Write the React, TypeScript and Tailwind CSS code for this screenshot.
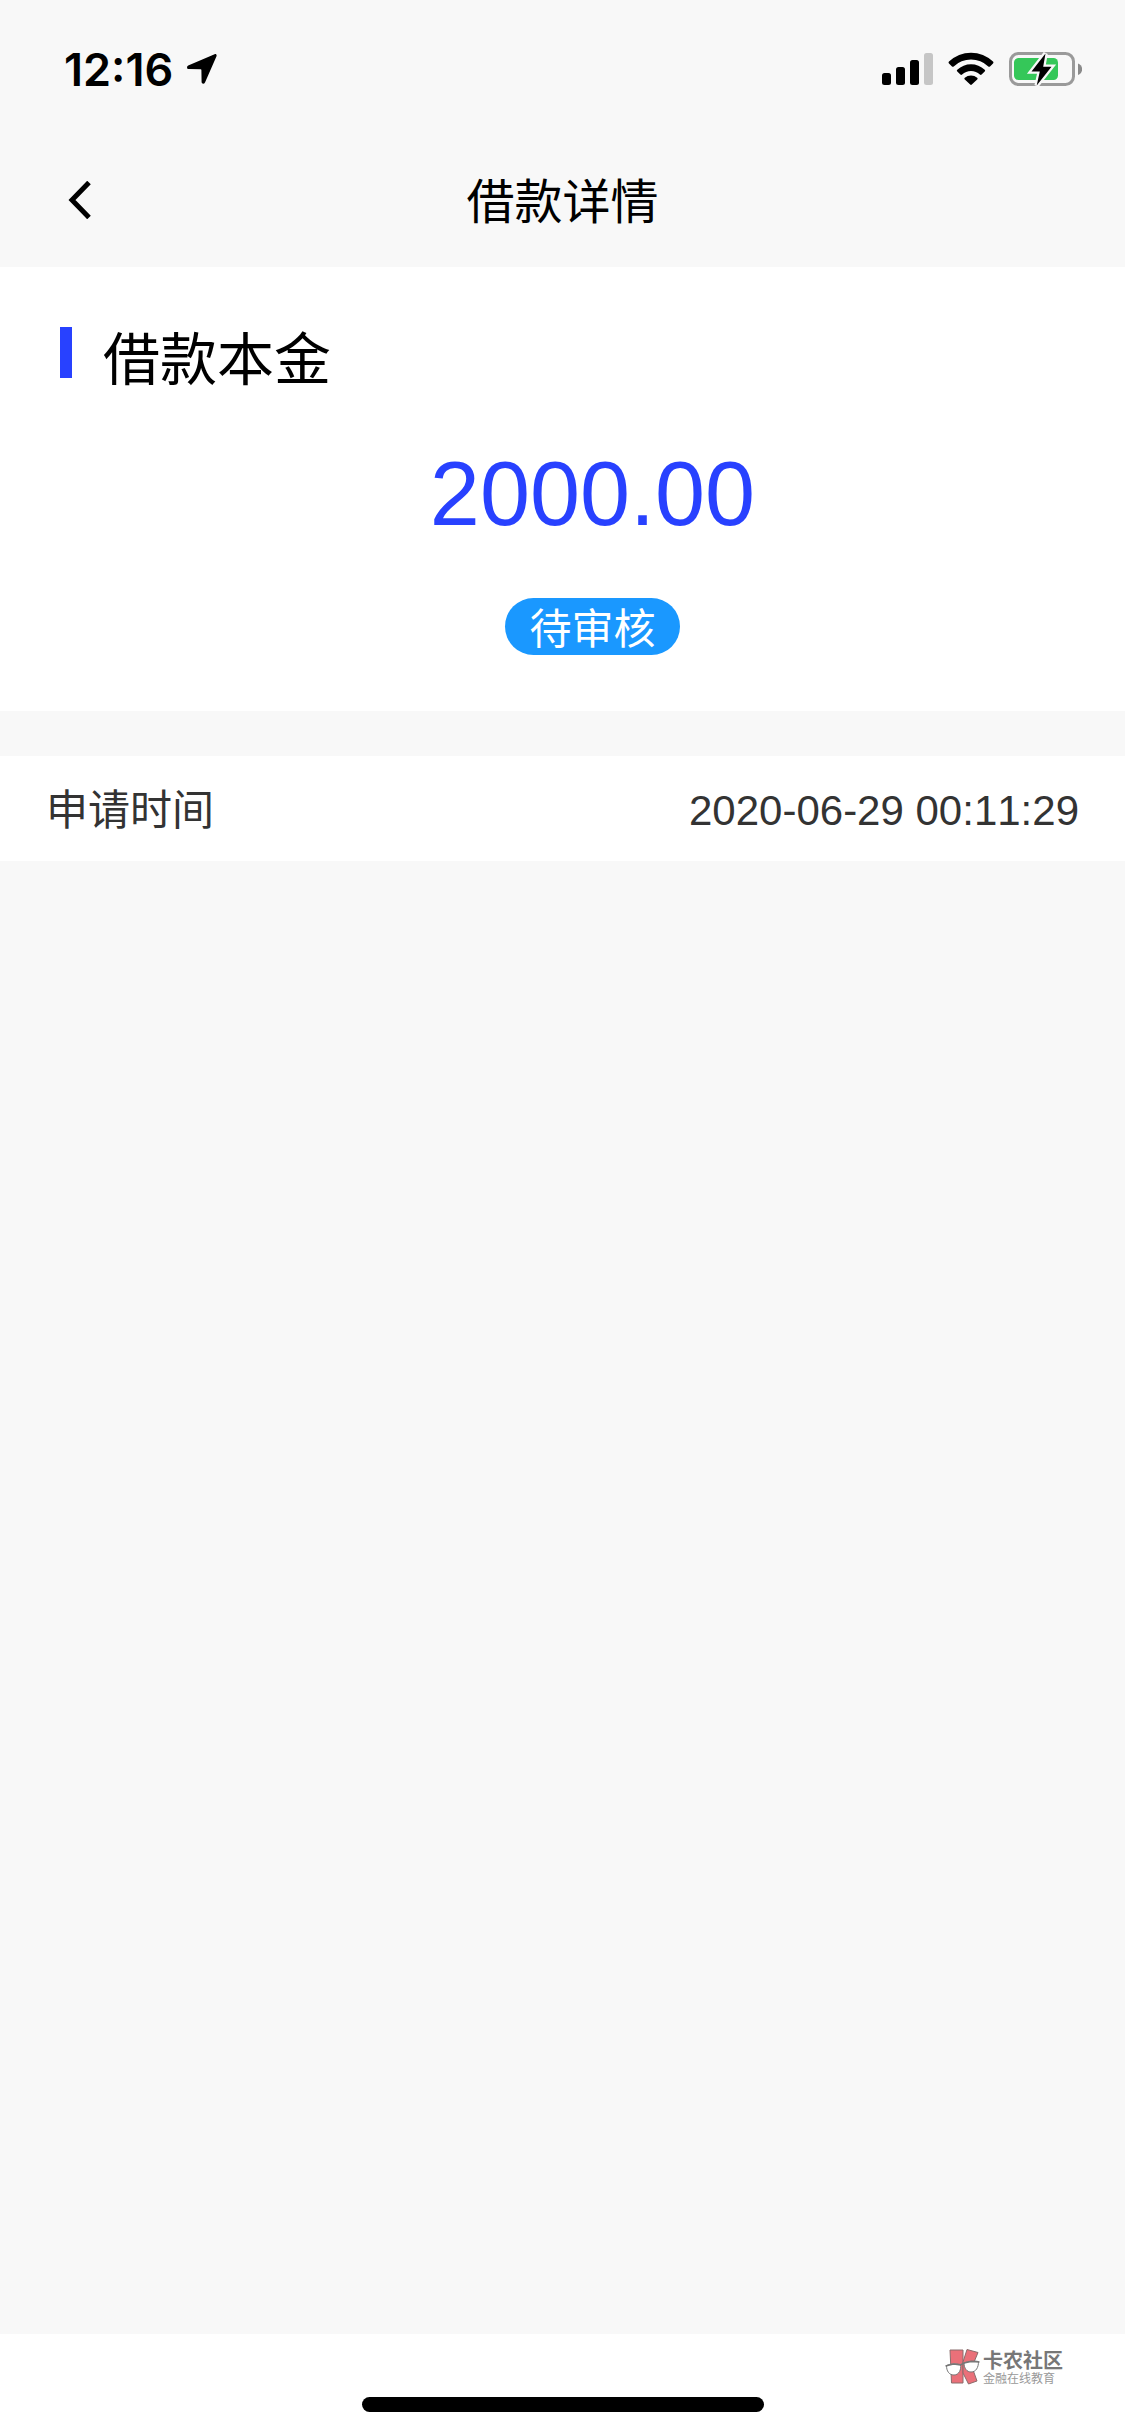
import React from 'react';

const SignalIcon: React.FC = () => (
  <svg width="51" height="32" viewBox="0 0 51 32" aria-hidden="true">
    <rect x="0" y="20" width="9" height="12" rx="2.5" />
    <rect x="14" y="14" width="9" height="18" rx="2.5" />
    <rect x="28" y="7" width="9" height="25" rx="2.5" />
    <rect x="42" y="0" width="9" height="32" rx="2.5" fill="#c6c6c6" />
  </svg>
);

const WifiIcon: React.FC = () => (
  <svg width="46" height="34" viewBox="0 0 46 34" aria-hidden="true">
    <path d="M1 9.6a31.5 31.5 0 0 1 44 0c.6.6.6 1.200 0 1.800l-3 3c-.5.5-1.200.5-1.700 0a25 25 0 0 0-34.600 0c-.5.5-1.200.5-1.700 0l-3-3c-.6-.6-.6-1.200 0-1.800z" />
    <path d="M9.300 17.800a20 20 0 0 1 27.400 0c.6.6.6 1.200 0 1.800l-3.100 3c-.5.5-1.100.5-1.700 0a13 13 0 0 0-17.800 0c-.6.5-1.200.5-1.700 0l-3.100-3c-.6-.6-.6-1.200 0-1.800z" />
    <path d="M16.800 25.700a9.500 9.500 0 0 1 12.400 0c.6.5.6 1.200 0 1.700l-5.400 5.200c-.5.500-1.100.500-1.600 0l-5.400-5.200c-.6-.5-.6-1.200 0-1.700z" />
  </svg>
);

const BatteryIcon: React.FC = () => (
  <svg width="73" height="36" viewBox="0 0 73 36" aria-hidden="true">
    <rect x="1.500" y="2.500" width="63" height="31" rx="8" fill="none" stroke="#9a9a9a" strokeWidth="3" />
    <path d="M69 12.500c5.500 1.500 5.500 10 0 11.500z" fill="#8a8a8a" />
    <rect x="5" y="7" width="44" height="22" rx="4.500" fill="#35c759" />
    <path
      d="M36.500 2.500L22.500 20.500h8.300L27.700 34.500L42.500 15.800h-8.300z"
      fill="#000"
      stroke="#f8f8f8"
      strokeWidth="4.500"
      paintOrder="stroke"
    />
  </svg>
);

const LocationIcon: React.FC = () => (
  <svg width="30" height="30" viewBox="0 0 30 30" aria-hidden="true">
    <path d="M27.600.2L1.200 11.600c-1.800.9-1.500 3.400.6 3.500L13.700 15.300c.5 0 .7.200.7.700L14.600 28c.1 2 2.500 2.300 3.400.500L29.500 2.200C30 .800 29-.300 27.600.200z" />
  </svg>
);

const LogoIcon: React.FC = () => (
  <svg width="35" height="36" viewBox="0 0 35 36" aria-hidden="true">
    <g fill="#ea7079" stroke="#8a6c6c" strokeWidth="1" strokeLinejoin="round">
      <path d="M5 1h13v33H6.500L6 22z" />
      <path d="M22 .5L33 3.500 27 18l5 14-8.500 3L18 24V13z" />
    </g>
    <g fill="#fff" stroke="#777" strokeWidth="1">
      <path d="M1.500 16.500c4-2 10-2 14-1 1 5-1.500 10.500-6.500 10.500-5 0-7.500-4-7.500-9.500z" />
      <path d="M19 14c4-2 10-2.500 14.500-1.500 0 6-2.500 10.500-7.500 10.500-4 0-7-3.500-7-9z" />
    </g>
    <path d="M.5 17l8-2 7 1 3.500-2 7-1.500 8.500.500" fill="none" stroke="#777" strokeWidth="1.500" />
  </svg>
);

const StatusBar: React.FC = () => (
  <div className="flex h-[132px] items-center justify-between pt-[6px] pr-[43px] pl-[64px]">
    <div className="flex items-center gap-[14px]">
      <span className="font-['Inter',sans-serif] text-[45px] leading-none font-semibold">12:16</span>
      <LocationIcon />
    </div>
    <div className="flex items-center gap-[15px]">
      <SignalIcon />
      <WifiIcon />
      <BatteryIcon />
    </div>
  </div>
);

const App: React.FC = () => {
  const loan = {
    principal: '2000.00',
    status: '待审核',
    appliedAt: '2020-06-29 00:11:29'
  };

  return (
    <div className="flex min-h-screen flex-col bg-[#f8f8f8] font-['Liberation_Sans','Noto_Sans_CJK_SC',sans-serif] text-black [font-kerning:none]">
      <header>
        <StatusBar />
        <div className="grid h-[135px] grid-cols-[1fr_auto_1fr] items-center px-[60px]">
          <button type="button" aria-label="返回" className="flex size-[40px] items-center justify-center">
            <svg width="24" height="38" viewBox="0 0 24 38" fill="none" stroke="#000" strokeWidth="5" aria-hidden="true">
              <path d="M21 1.500L4 19l17 17.500" />
            </svg>
          </button>
          <h1 className="pt-[6px] text-[48px] leading-[60px]">借款详情</h1>
        </div>
      </header>

      <main className="flex-1">
        <section className="bg-white pt-[60px] pb-[56px] pl-[60px]">
          <div className="flex h-[60px] items-start gap-[31px]">
            <span className="h-[51px] w-[12px] bg-[#2841ff]" />
            <h2 className="text-[57px] leading-[66px]">借款本金</h2>
          </div>
          <div className="mt-[55px] flex flex-col items-center">
            <p className="text-[90px] leading-[105px] text-[#2841ff]">{loan.principal}</p>
            <span className="mt-[51px] rounded-full bg-[#1a98ff] px-[24px] pt-[6px] text-[42px] leading-[51px] text-white">
              {loan.status}
            </span>
          </div>
        </section>

        <dl className="mt-[45px] flex h-[105px] items-center justify-between bg-white px-[46px] pt-[5px] text-[42px] leading-[60px] text-[#333]">
          <dt>申请时间</dt>
          <dd>{loan.appliedAt}</dd>
        </dl>
      </main>

      <footer className="flex h-[102px] flex-col items-end justify-between bg-white pt-[15px] pb-[24px]">
        <div className="mr-[62px] flex h-[36px] items-center gap-[3px] text-[#777]">
          <LogoIcon />
          <div className="pt-[4px]">
            <p className="text-[20px] leading-[20px] font-bold">卡农社区</p>
            <p className="text-[12px] leading-[16px] text-[#999]">金融在线教育</p>
          </div>
        </div>
        <div className="h-[15px] w-[402px] self-center rounded-full bg-black" />
      </footer>
    </div>
  );
};

export default App;
